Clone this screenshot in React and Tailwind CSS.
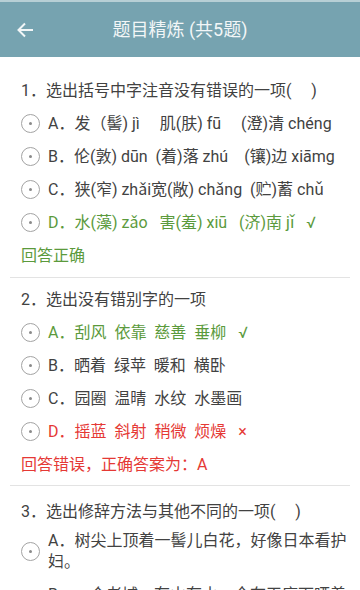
import React from "react";

const GREEN = "text-[#5b9a3c]";
const RED = "text-[#e53935]";

function Radio() {
  return (
    <div className="w-[19px] h-[19px] shrink-0 rounded-full border border-[#a3a3a3] flex items-center justify-center">
      <div className="w-[3px] h-[3px] rounded-full bg-[#8a8a8a]" />
    </div>
  );
}

function Option({ text, color = "text-[#424242]" }) {
  return (
    <div className="h-[33px] flex items-center">
      <Radio />
      <div className={`ml-[8px] whitespace-pre ${color}`}>{text}</div>
    </div>
  );
}

function Title({ text }) {
  return <div className="h-[33px] flex items-center whitespace-pre text-[#424242]">{text}</div>;
}

export default function App() {
  return (
    <div
      className="w-[360px] h-[590px] overflow-hidden bg-white text-[16px]"
      style={{ fontFamily: 'Roboto, "Noto Sans CJK SC", sans-serif' }}
    >
      <div className="h-[2px] bg-[#b7cfd5]" />
      <div className="h-[55px] bg-[#76a3b0] flex items-center relative">
        <svg className="ml-[17px]" width="17" height="16" viewBox="0 0 17 16" fill="none">
          <path d="M16 8H2M8 1.5L1.5 8L8 14.5" stroke="#f2f6f7" strokeWidth="2" />
        </svg>
        <div className="absolute left-0 right-0 text-center text-[18px] text-[#f2f6f7]">题目精炼 (共5题)</div>
      </div>

      <div className="pl-[21px] pt-[17px] pb-[5px]">
        <Title text="1．选出括号中字注音没有错误的一项(     )" />
        <Option text={"A．发（髻) jì　 肌(肤) fū　 (澄)清 chéng"} />
        <Option text={"B．伦(敦) dūn  (着)落 zhú　(镶)边 xiāmg"} />
        <Option text={"C．狭(窄) zhǎi宽(敞) chǎng  (贮)蓄 chǔ"} />
        <Option text={"D．水(藻) zǎo   害(羞) xiū   (济)南 jǐ   √"} color={GREEN} />
        <div className={`h-[33px] flex items-center ${GREEN}`}>回答正确</div>
      </div>
      <div className="mx-[10px] h-px bg-[#e3e3e3]" />

      <div className="pl-[21px] pt-[5px] pb-[4px]">
        <Title text="2．选出没有错别字的一项" />
        <Option text={"A．刮风  依靠  慈善  垂柳   √"} color={GREEN} />
        <Option text={"B．晒着  绿苹  暖和  横卧"} />
        <Option text={"C．园圈  温晴  水纹  水墨画"} />
        <Option text={"D．摇蓝  斜射  稍微  烦燥   ×"} color={RED} />
        <div className={`h-[33px] flex items-center ${RED}`}>回答错误，正确答案为：A</div>
      </div>
      <div className="mx-[10px] h-px bg-[#e3e3e3]" />

      <div className="pl-[21px] pr-[10px] pt-[9px]">
        <Title text="3．选出修辞方法与其他不同的一项(     )" />
        <div className="flex items-center pt-[2px]">
          <Radio />
          <div className="ml-[8px] leading-[21px] text-[#424242]">A．树尖上顶着一髻儿白花，好像日本看护妇。</div>
        </div>
        <div className="flex items-center pt-[12px]">
          <Radio />
          <div className="ml-[8px] leading-[21px] text-[#424242]">B．一个老城，有山有水，全在天底下晒着阳光，暖和安适地睡着。</div>
        </div>
      </div>
    </div>
  );
}
